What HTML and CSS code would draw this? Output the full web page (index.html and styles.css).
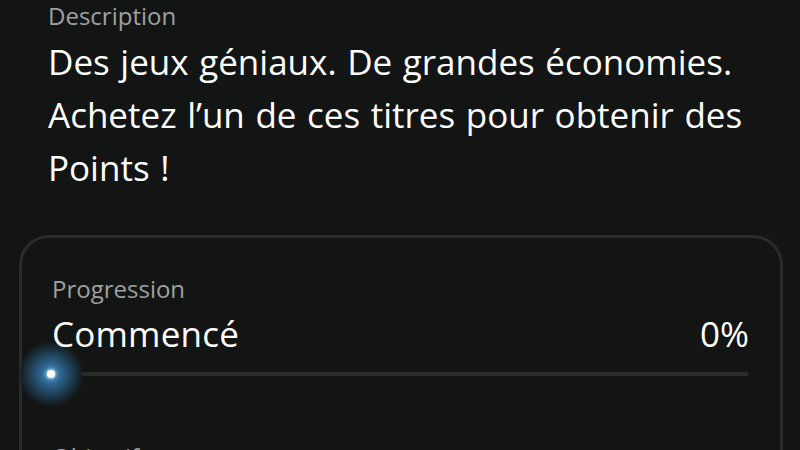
FILE: index.html
```html
<!DOCTYPE html>
<html lang="fr">
<head>
<meta charset="utf-8">
<link rel="stylesheet" href="styles.css">
</head>
<body>
<main class="page">
  <section class="desc">
    <div class="label">Description</div>
    <p class="desc-text">Des jeux géniaux. De grandes économies. Achetez l’un de ces titres pour obtenir des Points !</p>
  </section>
  <section class="card">
    <div class="card-label">Progression</div>
    <div class="row">
      <span class="status">Commencé</span>
      <span class="pct">0%</span>
    </div>
    <div class="track">
      <span class="dot"></span>
    </div>
    <div class="card-label next">Objectif</div>
  </section>
</main>
</body>
</html>
```
FILE: styles.css
```css
html, body {
  margin: 0;
  padding: 0;
  background: #131414;
  height: 100%;
  overflow: hidden;
}
.page {
  font-family: "Open Sans", "Noto Sans", sans-serif;
  color: #ffffff;
  padding: 0 17px 0 19px;
}
.desc {
  padding: 1px 29px 0;
}
.label {
  color: #a0a0a0;
  font-size: 24px;
  line-height: 30px;
}
.desc-text {
  margin: 4px 0 0;
  font-size: 35px;
  line-height: 53px;
  font-weight: 400;
  word-spacing: 1.5px;
}
.card {
  margin-top: 41px;
  border: 3px solid #2a2b2b;
  border-radius: 30px;
  padding: 36px 31px 0 30px;
  height: 300px;
}
.card-label {
  color: #a0a0a0;
  font-size: 24px;
  line-height: 30px;
}
.row {
  position: relative;
  z-index: 1;
  display: flex;
  justify-content: space-between;
  font-size: 35px;
  line-height: 44px;
  margin-top: 8px;
}
.status {
  letter-spacing: 0.2px;
}
.track {
  position: relative;
  height: 4px;
  background: #2a2b2b;
  margin-top: 16px;
  border-radius: 2px;
}
.dot {
  position: absolute;
  left: -1px;
  top: 2px;
  width: 0;
  height: 0;
}
.dot::before {
  content: "";
  position: absolute;
  left: -33px;
  top: -33px;
  width: 66px;
  height: 66px;
  border-radius: 50%;
  background: radial-gradient(circle closest-side, #5a9fd2 0%, #3f7fae 14%, #2d6088 34%, #224a67 54%, #1b3444 72%, #162229 88%, rgba(19, 20, 20, 0) 100%);
}
.dot::after {
  content: "";
  position: absolute;
  left: -4px;
  top: -4px;
  width: 8px;
  height: 8px;
  border-radius: 50%;
  background: #ffffff;
  box-shadow: 0 0 3px 1px rgba(210, 235, 255, 0.8);
}
.next {
  margin-top: 66px;
}
```
